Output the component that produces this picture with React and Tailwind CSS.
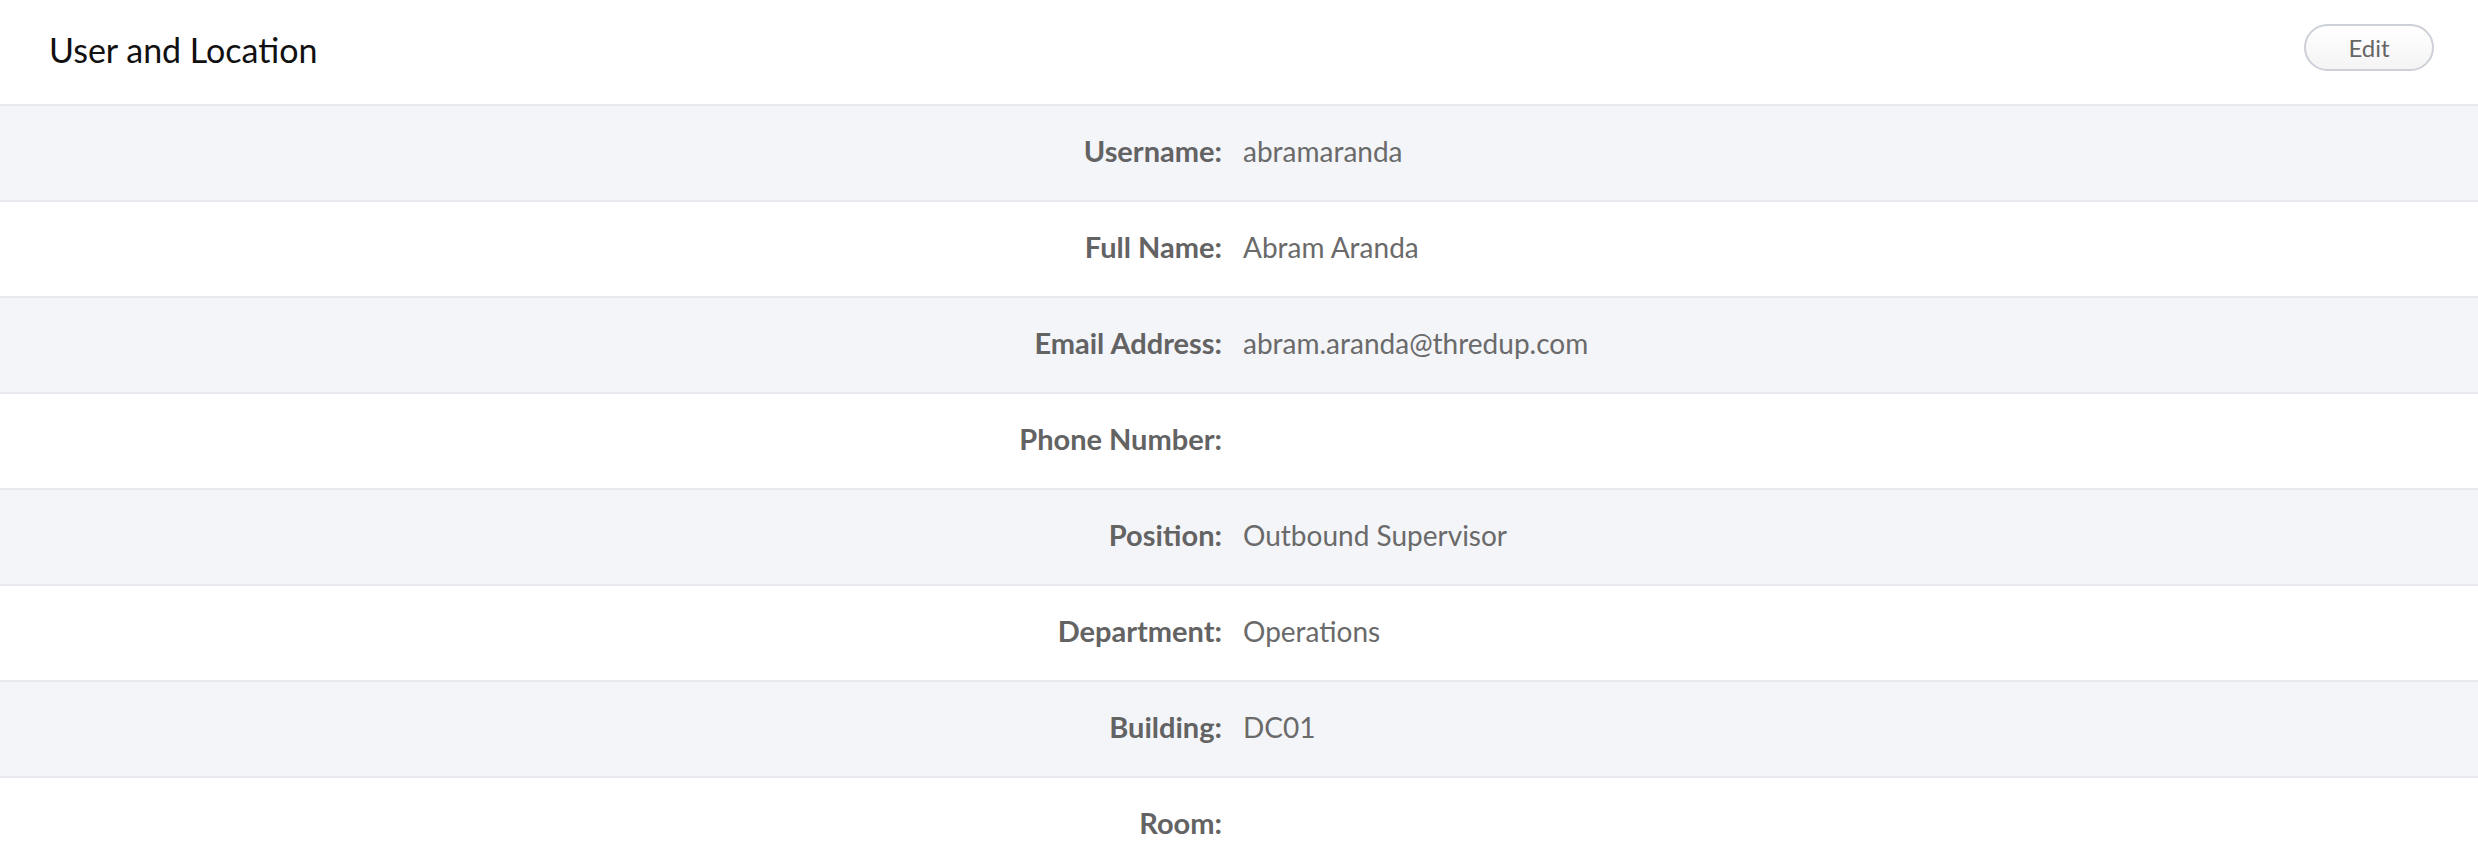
import React from 'react';

const rows = [
  { label: 'Username:', value: 'abramaranda' },
  { label: 'Full Name:', value: 'Abram Aranda' },
  { label: 'Email Address:', value: 'abram.aranda@thredup.com' },
  { label: 'Phone Number:', value: '' },
  { label: 'Position:', value: 'Outbound Supervisor' },
  { label: 'Department:', value: 'Operations' },
  { label: 'Building:', value: 'DC01' },
  { label: 'Room:', value: '' },
];

export default function App() {
  return (
    <div className="w-full min-h-screen bg-white font-['Lato','Liberation_Sans',sans-serif]">
      {/* Header */}
      <div className="flex items-start justify-between h-[106px] pl-[49px] pr-[44px] border-b-2 border-[#e8e9ef]">
        <h2 className="mt-[33px] text-[34px] text-[#111] leading-none">User and Location</h2>
        <button className="mt-[24px] w-[130px] h-[47px] rounded-full border-2 border-[#cdd0d8] bg-gradient-to-b from-white to-[#f4f4f4] text-[24px] text-[#666]">
          Edit
        </button>
      </div>

      {/* Detail rows */}
      <div className="flex flex-col">
        {rows.map((row, idx) => (
          <div
            key={row.label}
            className={
              'grid grid-cols-2 items-center h-[96px] pb-[5px] border-b-2 border-[#e8e9ef] ' +
              (idx % 2 === 0 ? 'bg-[#f4f5f9]' : 'bg-white')
            }
          >
            <span className="text-right pr-[17px] text-[29px] font-bold text-[#636363]">
              {row.label}
            </span>
            <span className="pl-[4px] text-[28px] text-[#6a6a6a]">{row.value}</span>
          </div>
        ))}
      </div>
    </div>
  );
}
